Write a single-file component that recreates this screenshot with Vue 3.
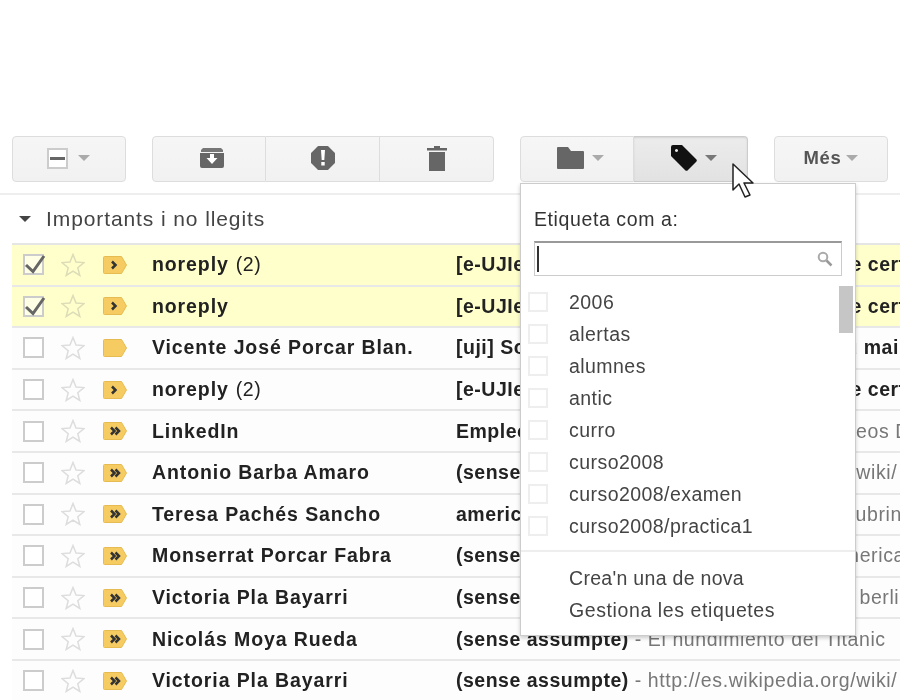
<script setup>
const rows = [
  { checked: true, mark: 1, name: 'noreply', count: '(2)', subject: "[e-UJIer] Avís dels enviament i la firma de certificats" },
  { checked: true, mark: 1, name: 'noreply', subject: "[e-UJIer] Avís dels enviament i la firma de certificats" },
  { mark: 0, name: 'Vicente José Porcar Blan.', subject: '[uji] Sobre el correu electrònic per el nou mail' },
  { mark: 1, name: 'noreply', count: '(2)', subject: "[e-UJIer] Avís dels enviament i la firma de certificats" },
  { mark: 2, name: 'LinkedIn', subject: 'Empleos', snippet: 'Nuevos empleos para él, tus videos Dia' },
  { mark: 2, name: 'Antonio Barba Amaro', subject: '(sense assumpte)', snippet: 'http://es.wikipedia.org/wiki/' },
  { mark: 2, name: 'Teresa Pachés Sancho', subject: 'america', snippet: 'Les fotos de viatge de la meva Rubrina' },
  { mark: 2, name: 'Monserrat Porcar Fabra', subject: '(sense assumpte)', snippet: 'Viatje a la costa de America' },
  { mark: 2, name: 'Victoria Pla Bayarri', subject: '(sense assumpte)', snippet: 'La caiguda del mur de berlin' },
  { mark: 2, name: 'Nicolás Moya Rueda', subject: '(sense assumpte)', snippet: 'El hundimiento del Titanic' },
  { mark: 2, name: 'Victoria Pla Bayarri', subject: '(sense assumpte)', snippet: 'http://es.wikipedia.org/wiki/' },
]
const labels = ['2006', 'alertas', 'alumnes', 'antic', 'curro', 'curso2008', 'curso2008/examen', 'curso2008/practica1']
</script>

<template>
  <div class="page">
    <div class="toolbar">
      <div class="group">
        <button class="btn">
          <span class="select-box"><i></i></span>
          <span class="caret"></span>
        </button>
      </div>
      <div class="group">
        <button class="btn">
          <svg class="archive" width="24" height="20" viewBox="0 0 24 20">
            <path d="M3 0h18l2 2v2H1V2z" fill="#777" />
            <path d="M0 5h24v13a2 2 0 0 1-2 2H2a2 2 0 0 1-2-2z" fill="#666" />
            <path d="M10 6h4v4h3.500l-5.500 6-5.500-6H10z" fill="#fff" />
          </svg>
        </button>
        <button class="btn">
          <svg width="24" height="24" viewBox="0 0 24 24">
            <path d="M7.500 1h9l6.500 6.500v9L16.500 23h-9L1 16.500v-9z" fill="#666" stroke="#666" stroke-width="2" stroke-linejoin="round" />
            <path d="M10 4h4l-.7 10h-2.600zM10.300 16h3.400v3.500h-3.400z" fill="#fff" />
          </svg>
        </button>
        <button class="btn">
          <svg width="20" height="25" viewBox="0 0 20 25">
            <path d="M7 0h6v2h7v2.500H0V2h7z" fill="#666" />
            <path d="M2 6h16v19H2z" fill="#666" />
          </svg>
        </button>
      </div>
      <div class="group">
        <button class="btn folder">
          <svg width="27" height="22" viewBox="0 0 27 22">
            <path d="M1 0h10l3 4h12a1 1 0 0 1 1 1v16a1 1 0 0 1-1 1H1a1 1 0 0 1-1-1V1a1 1 0 0 1 1-1z" fill="#666" />
          </svg>
          <span class="caret"></span>
        </button>
        <button class="btn active">
          <svg width="26" height="26" viewBox="0 0 26 26">
            <path d="M2 0h9l14 14a2 2 0 0 1 0 3l-8 8a2 2 0 0 1-3 0L0 11V2a2 2 0 0 1 2-2zM5.500 4a1.500 1.500 0 1 0 .01 0z" fill="#111" fill-rule="evenodd" />
          </svg>
          <span class="caret dark"></span>
        </button>
      </div>
      <div class="group">
        <button class="btn more">Més <span class="caret"></span></button>
      </div>
    </div>

    <div class="section">
      <span class="section-arrow"></span>
      <span>Importants i no llegits</span>
    </div>

    <div class="list">
      <div v-for="(row, i) in rows" :key="i" class="row" :class="{ selected: row.checked }">
        <span class="check">
          <svg v-if="row.checked" class="tick" width="24" height="24" viewBox="0 0 24 24">
            <path d="M2 15l7 6.500L20 6" fill="none" stroke="#666" stroke-width="3" />
          </svg>
        </span>
        <svg class="star" width="24" height="24" viewBox="0 0 24 24">
          <path d="M12 1.500l3 7.500 8 .6-6.200 5.100 2 7.800L12 18.200l-6.800 4.300 2-7.800L1 9.600 9 9z" fill="none" :stroke="row.checked ? '#dcdcb8' : '#ddd'" stroke-width="1.500" />
        </svg>
        <svg class="mark" width="24" height="18" viewBox="0 0 24 18">
          <path d="M1.500 .5H18.500l5 8.500-5 8.500H1.500a1 1 0 0 1-1-1V1.500a1 1 0 0 1 1-1z" fill="#f5cb62" stroke="#e6bc52" />
          <path v-if="row.mark === 1" d="M9 5.500l3.500 3.500-3.500 3.500" fill="none" stroke="#333" stroke-width="2.500" />
          <path v-if="row.mark === 2" d="M8 5.500l3.500 3.500-3.500 3.500M12.500 5.500L16 9l-3.500 3.500" fill="none" stroke="#333" stroke-width="2.500" />
        </svg>
        <span class="name">{{ row.name }}<span v-if="row.count" class="count">{{ row.count }}</span></span>
        <span class="text"><b>{{ row.subject }}</b><span v-if="row.snippet" class="snippet"> - {{ row.snippet }}</span></span>
      </div>
    </div>

    <div class="menu">
      <div class="menu-title">Etiqueta com a:</div>
      <div class="search">
        <span class="text-caret"></span>
        <svg width="16" height="16" viewBox="0 0 16 16">
          <circle cx="6" cy="6" r="4.300" fill="none" stroke="#aaa" stroke-width="2" />
          <path d="M9.500 9.500l5 5" stroke="#999" stroke-width="2.500" />
        </svg>
      </div>
      <div class="labels">
        <div v-for="label in labels" :key="label" class="label">
          <span class="label-check"></span>
          <span>{{ label }}</span>
        </div>
        <span class="thumb"></span>
      </div>
      <div class="menu-actions">
        <div class="create">Crea'n una de nova</div>
        <div>Gestiona les etiquetes</div>
      </div>
    </div>

    <svg class="cursor" width="24" height="36" viewBox="0 0 24 36">
      <path d="M1 1v26l6-6 6 13 5-2-6-12h9z" fill="#fff" stroke="#222" stroke-width="1.500" stroke-linejoin="round" />
    </svg>
  </div>
</template>

<style>
body {
  background: #fff;
}
</style>

<style scoped>
.page {
  position: relative;
  width: 900px;
  height: 700px;
  padding-top: 136px;
  box-sizing: border-box;
  overflow: hidden;
  background: #fff;
  font-family: "Liberation Sans", Arial, sans-serif;
  font-size: 19.5px;
  letter-spacing: 0.6px;
  color: #222;
  filter: blur(0.35px);
}
.toolbar {
  display: flex;
  gap: 26px;
  padding: 0 0 11px 12px;
  border-bottom: 2px solid #eee;
}
.group {
  display: flex;
}
.btn {
  display: flex;
  align-items: center;
  justify-content: center;
  gap: 10px;
  width: 114px;
  height: 46px;
  padding: 0 0 2px;
  border: 1px solid #ddd;
  border-left-width: 0;
  background: linear-gradient(#f6f6f6, #f1f1f1);
  font: inherit;
}
.btn:first-child {
  border-left-width: 1px;
  border-radius: 4px 0 0 4px;
}
.btn:last-child {
  border-radius: 0 4px 4px 0;
}
.btn:only-child {
  border-radius: 4px;
}
.btn.active {
  gap: 8px;
  padding-left: 7px;
  background: linear-gradient(#ececec, #e2e2e2);
  border-color: #ccc;
  box-shadow: inset 0 1px 2px rgba(0, 0, 0, 0.1);
}
.btn.folder {
  gap: 8px;
  padding-left: 7px;
}
.archive {
  margin-left: 5px;
}
.more {
  gap: 5px;
  font-weight: bold;
  font-size: 18.5px;
  letter-spacing: 0.6px;
  color: #555;
}
.caret {
  width: 0;
  height: 0;
  border: 6px solid transparent;
  border-top-color: #aaa;
  border-bottom-width: 0;
}
.caret.dark {
  border-top-color: #777;
}
.select-box {
  display: flex;
  align-items: center;
  justify-content: center;
  width: 21px;
  height: 21px;
  box-sizing: border-box;
  margin-left: -2px;
  border: 2px solid #ccc;
  background: #fff;
}
.select-box i {
  width: 15px;
  height: 3px;
  background: #666;
}
.section {
  display: flex;
  align-items: center;
  gap: 15px;
  height: 48px;
  padding-left: 19px;
  font-size: 21px;
  letter-spacing: 0.9px;
  color: #444;
}
.section-arrow {
  width: 0;
  height: 0;
  border: 6px solid transparent;
  border-top: 6px solid #444;
  border-bottom-width: 0;
}
.list {
  margin-left: 12px;
  border-top: 2px solid #e5e5e5;
}
.row {
  display: flex;
  align-items: center;
  height: 41.6px;
  box-sizing: border-box;
  padding-left: 11px;
  border-bottom: 2px solid #e8e8e8;
  background: #fdfdfd;
  white-space: nowrap;
}
.row.selected {
  background: #ffc;
}
.check {
  position: relative;
  flex: none;
  width: 21px;
  height: 21px;
  box-sizing: border-box;
  border: 2px solid #ccc;
  background: #fff;
}
.selected .check {
  background: #ffffe6;
}
.tick {
  position: absolute;
  top: -6px;
  left: -1px;
}
.star {
  flex: none;
  margin-left: 17px;
}
.mark {
  flex: none;
  margin-left: 18px;
}
.name {
  flex: none;
  width: 304px;
  margin-left: 25px;
  font-weight: bold;
  letter-spacing: 0.9px;
  overflow: hidden;
}
.count {
  margin-left: 7px;
  font-weight: normal;
  letter-spacing: 0.6px;
}
.text {
  flex: 1;
  min-width: 0;
  overflow: hidden;
  letter-spacing: 0.5px;
}
.snippet {
  color: #777;
  font-weight: normal;
  letter-spacing: 0.6px;
}
.menu {
  position: absolute;
  top: 183px;
  left: 520px;
  width: 336px;
  height: 453px;
  box-sizing: border-box;
  border: 1px solid #ccc;
  background: #fff;
  box-shadow: 0 2px 4px rgba(0, 0, 0, 0.2);
  color: #444;
}
.menu-title {
  padding: 23px 0 0 13px;
  line-height: 24px;
  color: #333;
}
.search {
  display: flex;
  align-items: center;
  justify-content: space-between;
  height: 35px;
  box-sizing: border-box;
  margin: 10px 13px 0;
  padding: 0 8px 0 2px;
  border: 1px solid #ccc;
  border-top: 2px solid #999;
}
.text-caret {
  width: 2px;
  height: 26px;
  background: #333;
}
.labels {
  position: relative;
  margin-top: 10px;
  height: 256px;
  letter-spacing: 0.45px;
}
.label {
  display: flex;
  align-items: center;
  gap: 21px;
  height: 32px;
  padding-left: 7px;
}
.label-check {
  width: 20px;
  height: 20px;
  box-sizing: border-box;
  border: 2px solid #eee;
}
.thumb {
  position: absolute;
  top: 0;
  right: 2px;
  width: 14px;
  height: 47px;
  background: #c6c6c6;
}
.menu-actions {
  margin-top: 8px;
  padding: 10px 0 0 48px;
  border-top: 2px solid #eee;
}
.menu-actions div {
  height: 32px;
  line-height: 32px;
}
.menu-actions .create {
  letter-spacing: 0.3px;
}
.cursor {
  position: absolute;
  top: 163px;
  left: 732px;
}
</style>
